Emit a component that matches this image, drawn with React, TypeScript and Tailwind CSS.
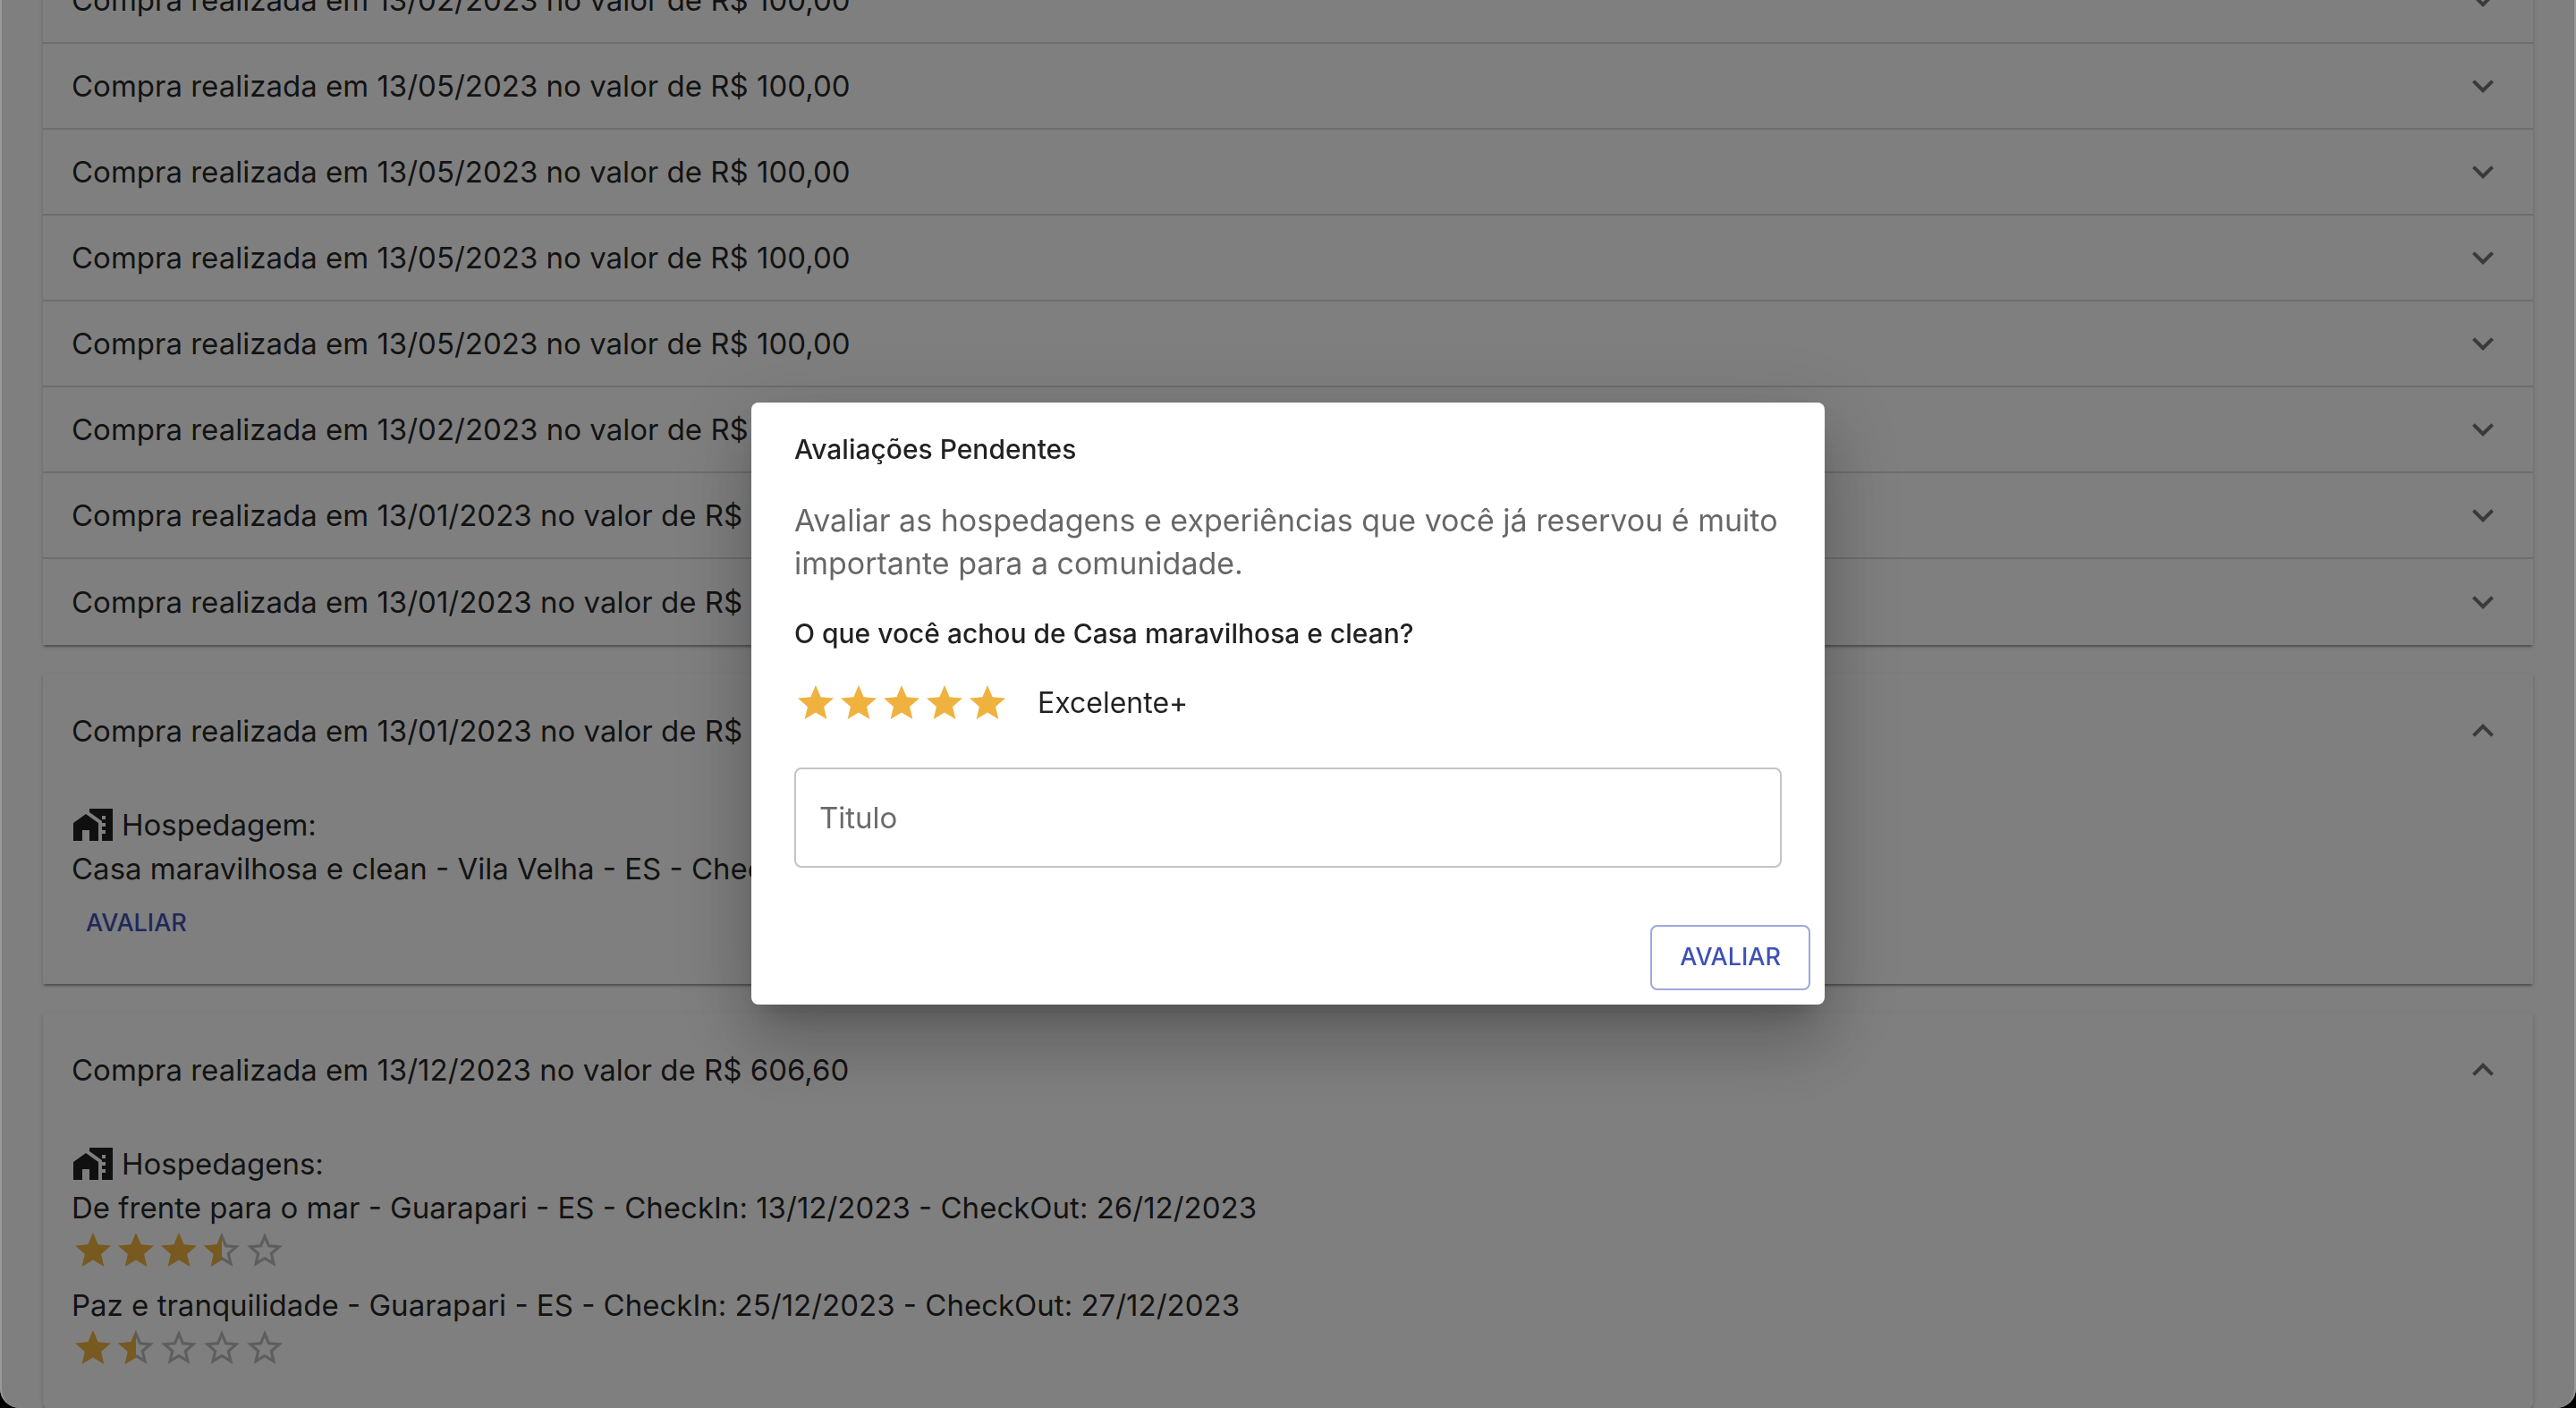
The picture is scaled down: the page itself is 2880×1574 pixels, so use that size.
import { useState } from "react";
import type { ReactNode } from "react";

const STAR =
  "M12 17.27L18.18 21l-1.64-7.03L22 9.24l-7.19-.61L12 2 9.19 8.63 2 9.24l5.46 4.73L5.82 21z";
const STAR_BORDER =
  "M22 9.24l-7.19-.62L12 2 9.19 8.63 2 9.24l5.46 4.73L5.82 21 12 17.27 18.18 21l-1.63-7.03L22 9.24zM12 15.4l-3.76 2.27 1-4.28-3.32-2.88 4.38-.38L12 6.1l1.71 4.04 4.38.38-3.32 2.88 1 4.28L12 15.4z";

function Chevron({ up = false }: { up?: boolean }) {
  return (
    <svg viewBox="0 0 24 24" className="size-12 shrink-0 fill-black/54" aria-hidden="true">
      <path
        d={
          up
            ? "M12 8l-6 6 1.41 1.41L12 10.83l4.59 4.58L18 14z"
            : "M16.59 8.59L12 13.17 7.41 8.59 6 10l6 6 6-6z"
        }
      />
    </svg>
  );
}

function HomeWorkIcon() {
  return (
    <svg viewBox="0 0 24 24" className="size-12 shrink-0 fill-black/87" aria-hidden="true">
      <path d="M1 11v10h5v-6h4v6h5V11L8 6z" />
      <path d="M10 3v1.97l7 5V11h2v2h-2v2h2v2h-2v4h6V3H10zm9 6h-2V7h2v2z" />
    </svg>
  );
}

function Star({ fill }: { fill: "full" | "half" | "empty" }) {
  return (
    <svg viewBox="0 0 24 24" className="size-12 shrink-0" aria-hidden="true">
      {fill !== "full" && <path d={STAR_BORDER} className="fill-[#bdbdbd]" />}
      {fill === "full" && <path d={STAR} className="fill-[#f0b23e]" />}
      {fill === "half" && (
        <path d="M12 17.27V2L9.19 8.63 2 9.24l5.46 4.73L5.82 21z" className="fill-[#f0b23e]" />
      )}
    </svg>
  );
}

function Rating({ value }: { value: number }) {
  return (
    <div className="flex h-[61px] items-start" role="img" aria-label={`${value} de 5 estrelas`}>
      {[1, 2, 3, 4, 5].map((n) => (
        <Star key={n} fill={value >= n ? "full" : value >= n - 0.5 ? "half" : "empty"} />
      ))}
    </div>
  );
}

const purchases = [
  { date: "13/02/2023", total: "100,00" },
  { date: "13/05/2023", total: "100,00" },
  { date: "13/05/2023", total: "100,00" },
  { date: "13/05/2023", total: "100,00" },
  { date: "13/05/2023", total: "100,00" },
  { date: "13/02/2023", total: "100,00" },
  { date: "13/01/2023", total: "100,00" },
  { date: "13/01/2023", total: "100,00" },
];

const paper =
  "bg-white shadow-[0_4px_2px_-2px_rgba(0,0,0,0.2),0_2px_2px_0_rgba(0,0,0,0.14),0_2px_6px_0_rgba(0,0,0,0.12)]";

function Summary({
  date,
  total,
  open = false,
}: {
  date: string;
  total: string;
  open?: boolean;
}) {
  return (
    <button
      type="button"
      aria-expanded={open}
      className={
        open
          ? "flex h-32 w-full items-center justify-between px-8 text-left"
          : "flex h-24 w-full items-center justify-between border-b-2 border-black/14 px-8 text-left last:border-b-0"
      }
    >
      <span>
        Compra realizada em {date} no valor de R$ {total}
      </span>
      <Chevron up={open} />
    </button>
  );
}

function Expanded({
  date,
  total,
  title,
  last = false,
  children,
}: {
  date: string;
  total: string;
  title: string;
  last?: boolean;
  children: ReactNode;
}) {
  return (
    <section className={last ? `${paper} rounded-b-lg` : paper}>
      <Summary date={date} total={total} open />
      <div className="px-8 pt-4 pb-8">
        <div className="flex h-[50px] items-center gap-2">
          <HomeWorkIcon />
          <span>{title}</span>
        </div>
        {children}
      </div>
    </section>
  );
}

const labels = ["Inútil", "Ruim", "Ok", "Bom", "Excelente+"];

function ReviewDialog() {
  const [value, setValue] = useState(5);
  return (
    <div
      role="dialog"
      aria-modal="true"
      aria-labelledby="review-title"
      className="w-full max-w-[1200px] rounded-lg bg-white shadow-[0_22px_30px_-14px_rgba(0,0,0,0.2),0_48px_76px_6px_rgba(0,0,0,0.14),0_18px_92px_16px_rgba(0,0,0,0.12)]"
    >
      <div className="px-12 pt-8">
        <h2 id="review-title" className="text-[30px] leading-10 font-medium">
          Avaliações Pendentes
        </h2>
        <p className="pt-9 text-[34px] leading-12 text-black/60">
          Avaliar as hospedagens e experiências que você já reservou é muito importante para a
          comunidade.
        </p>
        <fieldset>
          <legend className="pt-8 text-[30px] leading-[44px] font-medium">
            O que você achou de Casa maravilhosa e clean?
          </legend>
          <div className="flex items-center pt-8">
            {[1, 2, 3, 4, 5].map((n) => (
              <label key={n} className="relative flex cursor-pointer">
                <input
                  type="radio"
                  name="rating"
                  aria-label={`${n} estrelas`}
                  checked={value === n}
                  onChange={() => setValue(n)}
                  className="absolute inset-0 opacity-0"
                />
                <Star fill={value >= n ? "full" : "empty"} />
              </label>
            ))}
            <span className="ml-8 text-[32px] leading-12">{labels[value - 1]}</span>
          </div>
        </fieldset>
        <input
          type="text"
          aria-label="Titulo"
          placeholder="Titulo"
          className="mt-12 h-28 w-full rounded-lg border-2 border-[#c4c4c4] px-[26px] text-[33px] placeholder:text-[#6b6b6b]"
        />
      </div>
      <div className="flex justify-end px-4 pt-16 pb-4">
        <button
          type="button"
          className="h-[73px] rounded-lg border-2 border-[#3f51b5]/50 px-[31px] text-[27px] font-medium text-[#3f51b5]"
        >
          AVALIAR
        </button>
      </div>
    </div>
  );
}

export default function App() {
  return (
    <div className="h-screen overflow-hidden bg-black font-['Inter','Noto_Sans',sans-serif] text-[33px] leading-12 text-black/87">
      <main className="h-full overflow-hidden rounded-b-[22px] bg-white px-12">
        <div className="-mt-[47px] flex flex-col gap-8">
          <section className={`${paper} flex flex-col`}>
            {purchases.map((p, i) => (
              <Summary key={i} {...p} />
            ))}
          </section>
          <Expanded date="13/01/2023" total="100,00" title="Hospedagem:">
            <p>Casa maravilhosa e clean - Vila Velha - ES - CheckIn: 13/01/2023</p>
            <button
              type="button"
              className="block h-[73px] px-4 text-[27px] font-medium text-[#3f51b5]"
            >
              AVALIAR
            </button>
          </Expanded>
          <Expanded date="13/12/2023" total="606,60" title="Hospedagens:" last>
            <p>De frente para o mar - Guarapari - ES - CheckIn: 13/12/2023 - CheckOut: 26/12/2023</p>
            <Rating value={3.5} />
            <p>Paz e tranquilidade - Guarapari - ES - CheckIn: 25/12/2023 - CheckOut: 27/12/2023</p>
            <Rating value={1.5} />
          </Expanded>
        </div>
      </main>
      <div className="fixed inset-0 flex items-center justify-center rounded-b-[22px] border-x-2 border-white/20 bg-black/50 pb-0.5">
        <ReviewDialog />
      </div>
    </div>
  );
}
